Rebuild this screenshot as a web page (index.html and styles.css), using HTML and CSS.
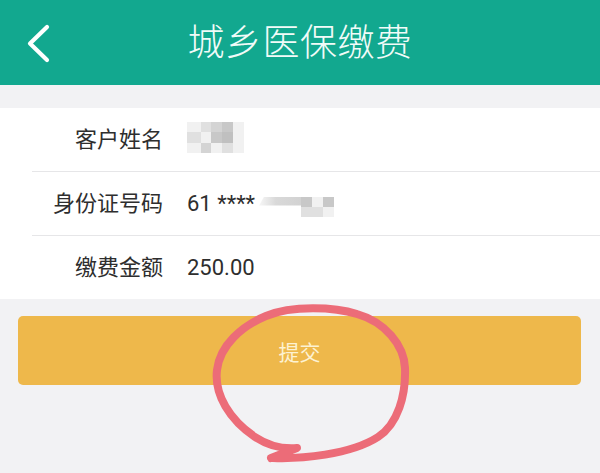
FILE: index.html
```html
<!DOCTYPE html>
<html lang="zh">
<head>
<meta charset="utf-8">
<link rel="stylesheet" href="styles.css">
</head>
<body>
<div class="page">
  <header class="topbar">
    <div class="back">
      <svg width="60" height="85" viewBox="0 0 60 85"><path d="M47 27 L30 43.5 L47 60" fill="none" stroke="#ffffff" stroke-width="4.2" stroke-linecap="round" stroke-linejoin="round"/></svg>
    </div>
    <h1 class="title">城乡医保缴费</h1>
    <div></div>
  </header>
  <div class="gap"></div>
  <section class="card">
    <div class="row">
      <span class="label">客户姓名</span>
      <span class="mosaic name-mosaic">
        <i class="c1"></i><i class="c2"></i><i class="c3"></i><i class="c4"></i><i class="c1"></i>
        <i class="c2"></i><i class="c1"></i><i class="c4"></i><i class="c5"></i><i class="c1"></i>
        <i class="c1"></i><i class="c3"></i><i class="c1"></i><i class="c2"></i><i class="c1"></i>
      </span>
    </div>
    <div class="row">
      <span class="label">身份证号码</span>
      <span class="value">61 ****</span>
      <span class="id-blur">
        <span class="strip"></span>
        <span class="mosaic id-mosaic">
          <i class="c4"></i><i class="c1"></i><i class="c4"></i>
          <i class="c2"></i><i class="c2"></i><i class="c1"></i>
        </span>
      </span>
    </div>
    <div class="row">
      <span class="label">缴费金额</span>
      <span class="value">250.00</span>
    </div>
  </section>
  <div class="actions">
    <button class="submit">提交</button>
  </div>
</div>
<svg class="annot" width="600" height="473" viewBox="0 0 600 473">
  <path d="M273 458 C300 459 350 455 378 437 C398 424 406 395 405 368 C404 345 385 322 357 314 C335 307 292 305 266 316 C242 326 220 345 217 370 C214 395 230 420 255 437 C270 447 285 449 297 448 L271 458" fill="none" stroke="#ec6c78" stroke-width="8" stroke-linecap="round" stroke-linejoin="round"/>
</svg>
</body>
</html>
```

FILE: styles.css
```css
html, body {
  margin: 0;
  padding: 0;
}
body {
  width: 600px;
  height: 473px;
  overflow: hidden;
  background: #f2f2f4;
  font-family: Roboto, "Noto Sans CJK SC", sans-serif;
  position: relative;
}
.page {
  display: flex;
  flex-direction: column;
}
.topbar {
  height: 85px;
  background: #12a88f;
  display: grid;
  grid-template-columns: 1fr auto 1fr;
  align-items: center;
}
.back {
  display: flex;
  align-items: center;
}
.back svg {
  display: block;
}
.title {
  margin: 0;
  font-family: "Noto Sans CJK SC", sans-serif;
  font-weight: 300;
  font-size: 37px;
  color: #f1fbf8;
  letter-spacing: 0.5px;
  line-height: 1;
  padding-bottom: 4px;
}
.gap {
  height: 23px;
}
.card {
  background: #ffffff;
  display: flex;
  flex-direction: column;
}
.row {
  height: 63px;
  display: flex;
  align-items: center;
  border-bottom: 1px solid #e6e6e8;
  margin-left: 32px;
}
.row:last-child {
  border-bottom: none;
}
.label {
  width: 131px;
  text-align: right;
  font-family: "Noto Sans CJK SC", sans-serif;
  font-size: 22px;
  color: #2e2e2e;
  margin-right: 24px;
  margin-bottom: 6px;
}
.value {
  font-size: 22px;
  color: #2e2e2e;
}
.mosaic {
  display: grid;
}
.mosaic i {
  display: block;
}
.name-mosaic {
  grid-template-columns: 14px 10px 11px 11px 11px;
  grid-template-rows: 10px 11px 10px;
  margin-top: -4px;
}
.c1 { background: #f1f1f1; }
.c2 { background: #e0e0e0; }
.c3 { background: #d4d4d4; }
.c4 { background: #c8c8c8; }
.c5 { background: #c0c0c0; }
.id-blur {
  display: flex;
  align-items: flex-start;
  margin-left: 4px;
  margin-top: 6px;
}
.strip {
  width: 42px;
  height: 9px;
  background: linear-gradient(90deg, #f7f7f7, #d9d9d9 40%, #d2d2d2);
  clip-path: polygon(12% 0, 100% 0, 100% 100%, 0 100%);
}
.id-mosaic {
  grid-template-columns: 11px 11px 11px;
  grid-template-rows: 10px 10px;
}
.actions {
  padding: 17px 19px 0 18px;
}
.submit {
  width: 100%;
  height: 69px;
  border: none;
  border-radius: 5px;
  background: #eeb84b;
  color: #fdf2d2;
  font-family: "Noto Sans CJK SC", sans-serif;
  font-size: 21px;
  display: flex;
  align-items: center;
  justify-content: center;
  padding: 0;
}
.annot {
  position: absolute;
  left: 0;
  top: 0;
  pointer-events: none;
}
```
